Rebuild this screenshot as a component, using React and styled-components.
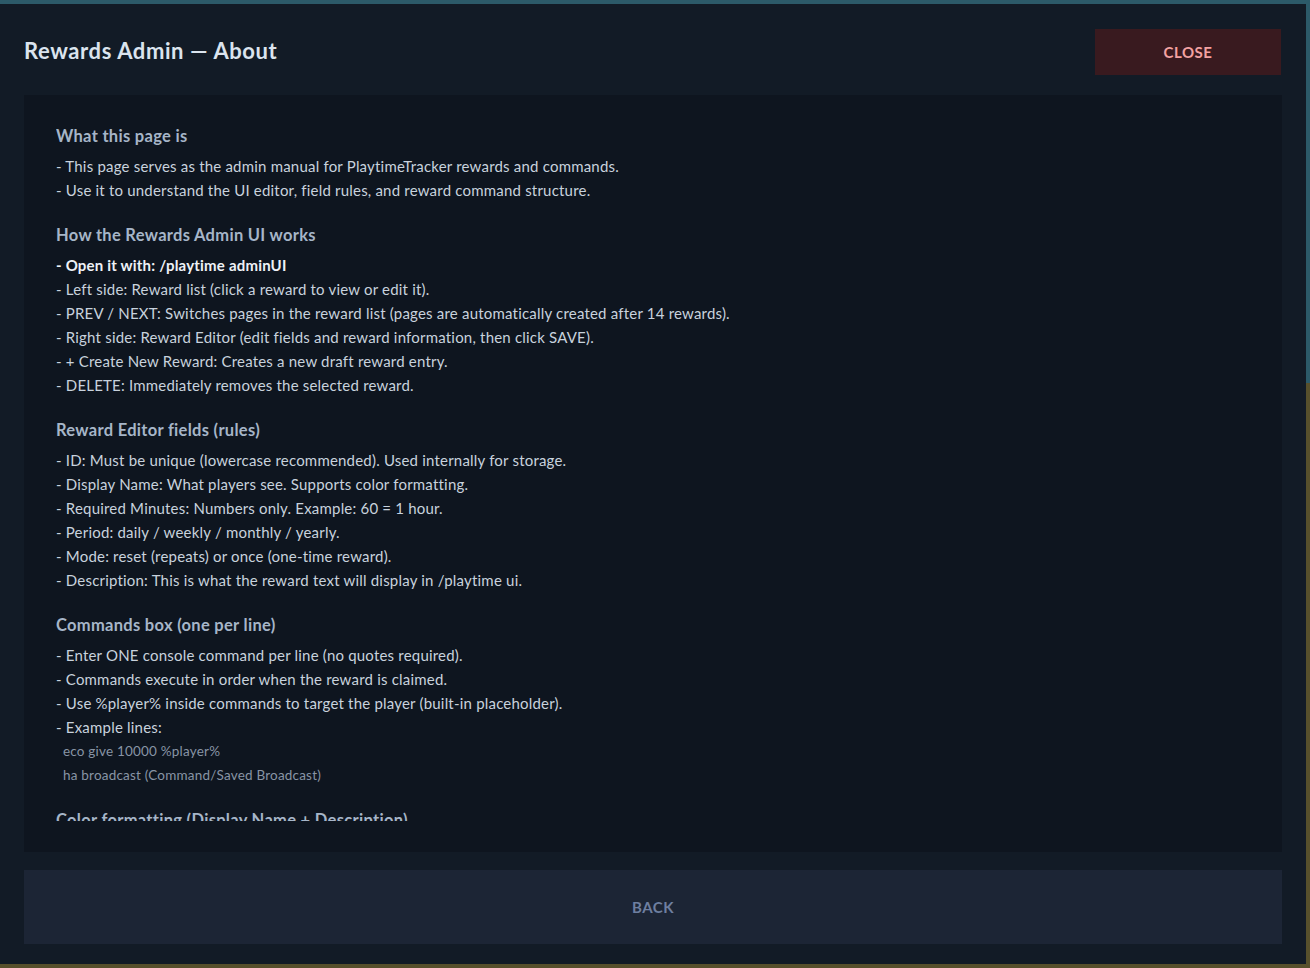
import React from "react";
import styled, { createGlobalStyle } from "styled-components";

const Global = createGlobalStyle`
  html {
    min-height: 100%;
    background: linear-gradient(to bottom, #2c5a69 0, #2c5a69 383px, #57502c 383px, #57502c 100%);
  }
  html, body { margin: 0; padding: 0; }
  body {
    background: transparent;
    font-family: Lato, "Open Sans", sans-serif;
    -webkit-font-smoothing: antialiased;
  }
`;

const Modal = styled.div`
  margin: 4px 4px 4px 0;
  height: 960px;
  background: #121b26;
  padding: 0 24px 20px 24px;
  box-sizing: border-box;
  display: flex;
  flex-direction: column;
`;

const Header = styled.div`
  display: flex;
  align-items: center;
  justify-content: space-between;
  padding: 25px 1px 20px 0;
`;

const Title = styled.h1`
  margin: -3px 0 0 0;
  font-size: 22px;
  font-weight: 700;
  color: #dbe4ee;
  letter-spacing: 0.6px;
`;

const CloseButton = styled.button`
  width: 186px;
  height: 46px;
  border: none;
  background: #391a1f;
  color: #f3a2a2;
  font-family: inherit;
  font-weight: 700;
  font-size: 15px;
  letter-spacing: 0.5px;
  cursor: pointer;
`;

const ContentBox = styled.div`
  background: #0e151f;
  height: 757px;
  box-sizing: border-box;
  padding: 30px 32px 31px 32px;
  display: flex;
  flex-direction: column;
`;

const Scroll = styled.div`
  flex: 1;
  overflow: hidden;
`;

const Section = styled.section`
  margin-bottom: 22px;
`;

const Heading = styled.h2`
  margin: 0 0 7px 0;
  font-size: 16.5px;
  line-height: 22px;
  font-weight: 700;
  color: #a6b5c8;
  letter-spacing: 0.3px;
`;

const Line = styled.div`
  font-size: 15px;
  line-height: 24px;
  letter-spacing: 0.2px;
  color: ${(p) => (p.$strong ? "#eef2f7" : "#c8d2dd")};
  font-weight: ${(p) => (p.$strong ? 700 : 400)};
  white-space: nowrap;
`;

const Example = styled.div`
  font-size: 13.5px;
  line-height: 24px;
  letter-spacing: 0.2px;
  color: #8894a5;
  padding-left: 7px;
  white-space: nowrap;
`;

const BackButton = styled.button`
  margin-top: 18px;
  height: 74px;
  width: 100%;
  border: none;
  background: #1c2535;
  color: #6e7fa0;
  font-family: inherit;
  font-weight: 700;
  font-size: 15px;
  letter-spacing: 0.5px;
  cursor: pointer;
`;

const sections = [
  {
    title: "What this page is",
    lines: [
      "- This page serves as the admin manual for PlaytimeTracker rewards and commands.",
      "- Use it to understand the UI editor, field rules, and reward command structure.",
    ],
  },
  {
    title: "How the Rewards Admin UI works",
    lines: [
      { text: "- Open it with: /playtime adminUI", strong: true },
      "- Left side: Reward list (click a reward to view or edit it).",
      "- PREV / NEXT: Switches pages in the reward list (pages are automatically created after 14 rewards).",
      "- Right side: Reward Editor (edit fields and reward information, then click SAVE).",
      "- + Create New Reward: Creates a new draft reward entry.",
      "- DELETE: Immediately removes the selected reward.",
    ],
  },
  {
    title: "Reward Editor fields (rules)",
    lines: [
      "- ID: Must be unique (lowercase recommended). Used internally for storage.",
      "- Display Name: What players see. Supports color formatting.",
      "- Required Minutes: Numbers only. Example: 60 = 1 hour.",
      "- Period: daily / weekly / monthly / yearly.",
      "- Mode: reset (repeats) or once (one-time reward).",
      "- Description: This is what the reward text will display in /playtime ui.",
    ],
  },
  {
    title: "Commands box (one per line)",
    lines: [
      "- Enter ONE console command per line (no quotes required).",
      "- Commands execute in order when the reward is claimed.",
      "- Use %player% inside commands to target the player (built-in placeholder).",
      "- Example lines:",
      { text: "eco give 10000 %player%", example: true },
      { text: "ha broadcast (Command/Saved Broadcast)", example: true },
    ],
  },
  {
    title: "Color formatting (Display Name + Description)",
    lines: [
      "- Use & color codes, e.g. &a green, &c red, &e yellow.",
      "- Hex colors are supported with &#RRGGBB.",
    ],
  },
];

export default function App() {
  return (
    <>
      <Global />
      <Modal>
        <Header>
          <Title>Rewards Admin — About</Title>
          <CloseButton>CLOSE</CloseButton>
        </Header>
        <ContentBox>
          <Scroll>
            {sections.map((s) => (
              <Section key={s.title}>
                <Heading>{s.title}</Heading>
                {s.lines.map((l, i) => {
                  if (typeof l === "string") return <Line key={i}>{l}</Line>;
                  if (l.example) return <Example key={i}>{l.text}</Example>;
                  return (
                    <Line key={i} $strong>
                      {l.text}
                    </Line>
                  );
                })}
              </Section>
            ))}
          </Scroll>
        </ContentBox>
        <BackButton>BACK</BackButton>
      </Modal>
    </>
  );
}
